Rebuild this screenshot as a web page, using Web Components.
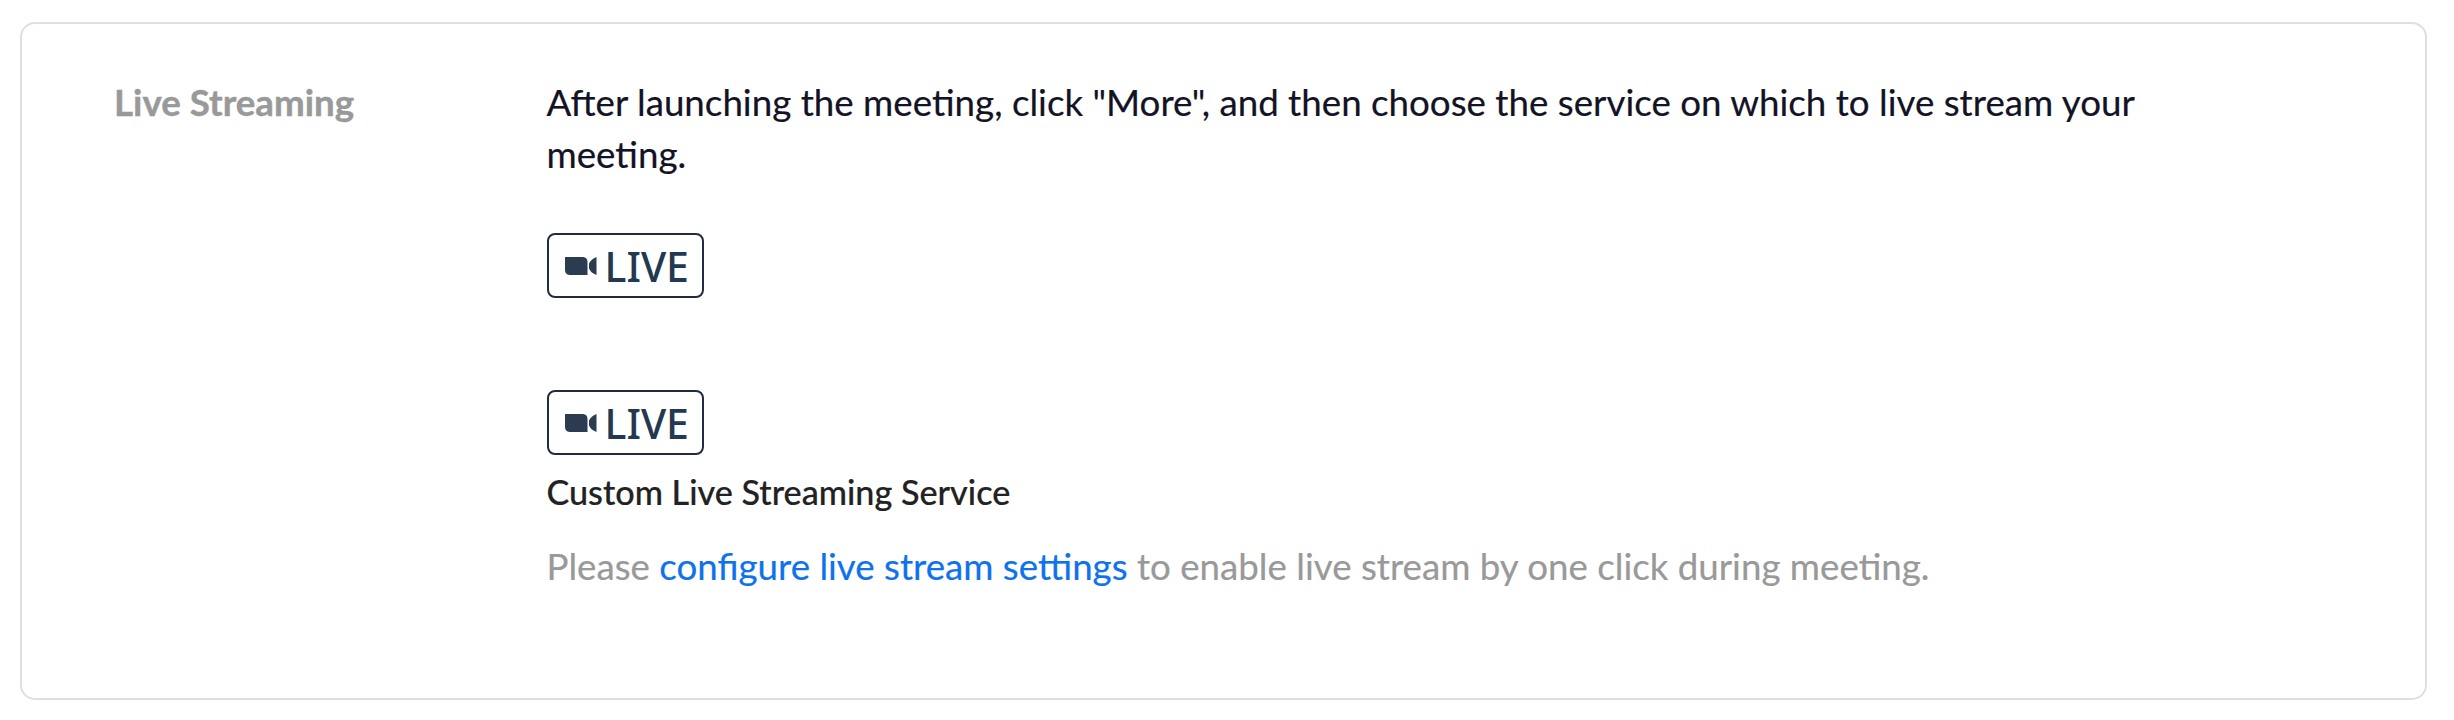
<!DOCTYPE html>
<html lang="en">
<head>
<meta charset="utf-8">
<title>Live Streaming</title>
<style>
body{margin:0;background:#fff;font-family:Lato,"Liberation Sans",sans-serif}
</style>
</head>
<body>
<template id="setting-card">
<style>
:host{display:flex;box-sizing:border-box;width:2407px;height:678px;margin:22px 0 0 20px;padding:52px 90px 0 92px;border:2px solid #dfdfdf;border-radius:15px;background:#fff}
.label{flex:none;width:432.500px;font-size:36.7px;line-height:52px;font-weight:700;color:#999;-webkit-text-stroke:.4px}
.body{flex:none;width:1660px;display:flex;flex-direction:column;align-items:flex-start}
</style>
<div class="label"><slot name="label"></slot></div>
<div class="body"><slot></slot></div>
</template>
<template id="live-badge">
<style>
:host{display:flex;box-sizing:border-box;width:157px;height:65px;align-items:center;padding-left:16px;border:2px solid #232b40;border-radius:8px;color:#23394f;font:500 41px/60px "Noto Sans","Open Sans",sans-serif}
svg{flex:none;width:32px;height:18px;margin-right:8px}
</style>
<svg viewBox="0 0 32 18" aria-hidden="true"><path fill="#2b3b50" d="M0 0H18Q22.500.5 22.500 5V18H4.500Q0 17.500 0 13ZM24 6.500Q26 2 31.500 0V18Q26 16 24 11.500Z"/></svg><span><slot></slot></span>
</template>
<template id="text-line">
<style>
:host{display:block;font-size:36.72px;line-height:52px;color:#131325;-webkit-text-stroke:.2px}
:host([kind=name]){font-size:34.2px;line-height:48px;color:#222}
:host([kind=hint]){font-size:36.7px;color:#999;white-space:nowrap}
::slotted(a){color:#0e72ed;text-decoration:none}
</style>
<slot></slot>
</template>
<template id="live-service">
<style>
:host{display:flex;flex-direction:column;align-items:flex-start}
</style>
<slot></slot>
</template>
<style>
text-line.intro{height:105px;margin-bottom:52px}
live-service + live-service{margin-top:92px}
text-line.name{margin-top:13px;font-weight:500}
text-line.hint{margin-top:24px}
</style>
<setting-card>
<span slot="label">Live Streaming</span>
<text-line class="intro">After launching the meeting, click "More", and then choose the service on which to live stream your meeting.</text-line>
<live-service><live-badge>LIVE</live-badge></live-service>
<live-service><live-badge>LIVE</live-badge>
<text-line class="name" kind="name">Custom Live Streaming Service</text-line>
<text-line class="hint" kind="hint">Please <a href="#">configure live stream settings</a> to enable live stream by one click during meeting.</text-line>
</live-service>
</setting-card>
<script>
for (const name of ['setting-card', 'live-badge', 'text-line', 'live-service']) {
  customElements.define(name, class extends HTMLElement {
    constructor() {
      super();
      this.attachShadow({mode: 'open'}).append(document.getElementById(name).content.cloneNode(true));
    }
  });
}
</script>
</body>
</html>
